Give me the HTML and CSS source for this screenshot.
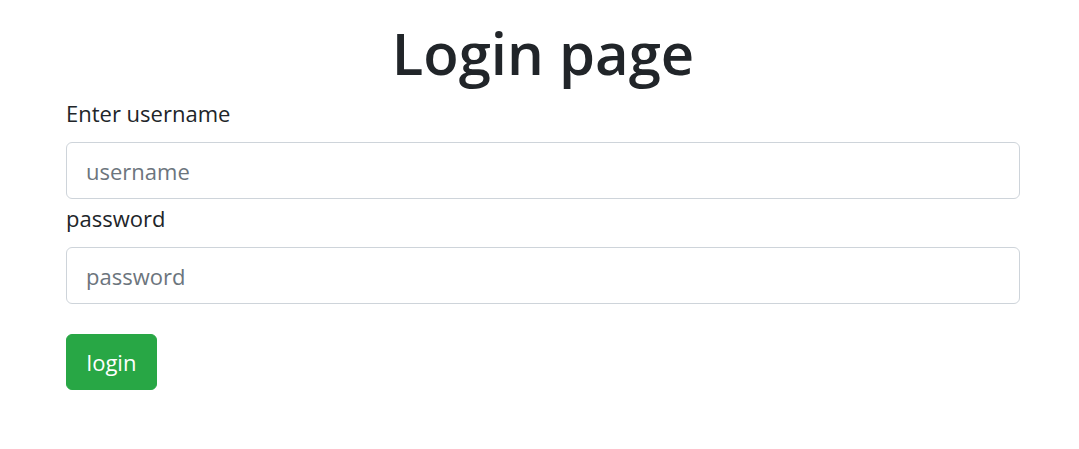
FILE: index.html
```html
<!DOCTYPE html>
<html lang="en">
<head>
<meta charset="utf-8">
<title>Login page</title>
<link rel="stylesheet" href="styles.css">
</head>
<body>
<main class="container">
  <h1 class="title">Login page</h1>
  <form class="login-form">
    <div class="field">
      <label class="field-label" for="username">Enter username</label>
      <input class="field-input" id="username" type="text" placeholder="username">
    </div>
    <div class="field">
      <label class="field-label" for="password">password</label>
      <input class="field-input" id="password" type="password" placeholder="password">
    </div>
    <button class="btn-login" type="submit">login</button>
  </form>
</main>
</body>
</html>
```
FILE: styles.css
```css
html, body {
  margin: 0;
  padding: 0;
  background: #ffffff;
}
body {
  font-family: "Open Sans", "Noto Sans", sans-serif;
  color: #212529;
}
.container {
  width: 954px;
  margin-left: 66px;
}
.title {
  margin: 12px 0 3px;
  font-size: 58px;
  font-weight: 600;
  line-height: 82px;
  text-align: center;
  color: #212529;
}
.login-form {
  display: flex;
  flex-direction: column;
  gap: 3px;
}
.field {
  display: flex;
  flex-direction: column;
}
.field-label {
  font-size: 22px;
  line-height: 33px;
  margin-bottom: 12px;
}
.field-input {
  box-sizing: border-box;
  height: 57px;
  padding: 0 19px;
  font-family: inherit;
  font-size: 22px;
  color: #495057;
  border: 1px solid #ced4da;
  border-radius: 6px;
  outline: none;
}
.field-input::placeholder {
  color: #6c757d;
}
.btn-login {
  align-self: flex-start;
  margin-top: 27px;
  box-sizing: border-box;
  width: 91px;
  height: 56px;
  padding: 0;
  font-family: inherit;
  font-size: 22px;
  color: #ffffff;
  background: #28a745;
  border: 1px solid #28a745;
  border-radius: 6px;
}
```
